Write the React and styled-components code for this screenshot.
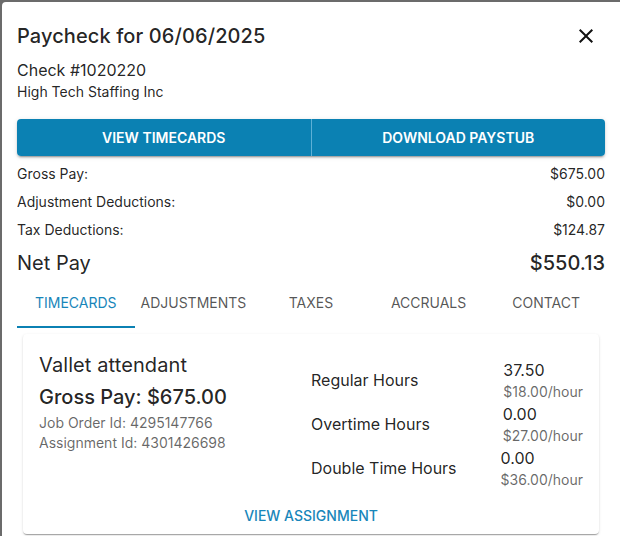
import { useState } from 'react';
import styled, { createGlobalStyle } from 'styled-components';

const GlobalStyle = createGlobalStyle`
  html, body {
    margin: 0;
    padding: 0;
    background: #6b6b6b;
    overflow: hidden;
  }
  body {
    font-family: Inter, Roboto, "Liberation Sans", Arial, sans-serif;
    color: rgba(0, 0, 0, 0.87);
  }
  * { box-sizing: border-box; }
`;

const PRIMARY = '#0b81b3';

const summary = [
  { label: 'Gross Pay:', value: '$675.00' },
  { label: 'Adjustment Deductions:', value: '$0.00' },
  { label: 'Tax Deductions:', value: '$124.87' },
];

const tabs = ['Timecards', 'Adjustments', 'Taxes', 'Accruals', 'Contact'];

const hours = [
  { label: 'Regular Hours', value: '37.50', rate: '$18.00/hour' },
  { label: 'Overtime Hours', value: '0.00', rate: '$27.00/hour' },
  { label: 'Double Time Hours', value: '0.00', rate: '$36.00/hour' },
];

const CloseIcon = () => (
  <svg width="24" height="24" viewBox="0 0 24 24" fill="currentColor">
    <path d="M19 6.41 17.59 5 12 10.59 6.41 5 5 6.41 10.59 12 5 17.59 6.41 19 12 13.41 17.59 19 19 17.59 13.41 12z" />
  </svg>
);

const App = () => {
  const [active, setActive] = useState(0);

  return (
    <>
      <GlobalStyle />
      <Dialog>
        <Header>
          <Title>Paycheck for 06/06/2025</Title>
          <CloseButton aria-label="close">
            <CloseIcon />
          </CloseButton>
        </Header>
        <Content>
          <CheckNo>Check #1020220</CheckNo>
          <Company>High Tech Staffing Inc</Company>
          <ButtonGroup>
            <GroupButton>View Timecards</GroupButton>
            <GroupButton>Download Paystub</GroupButton>
          </ButtonGroup>
          <Summary>
            {summary.map(row => (
              <SummaryRow key={row.label}>
                <span>{row.label}</span>
                <span>{row.value}</span>
              </SummaryRow>
            ))}
          </Summary>
          <NetRow>
            <NetLabel>Net Pay</NetLabel>
            <NetValue>$550.13</NetValue>
          </NetRow>
          <TabBar>
            {tabs.map((t, i) => (
              <Tab key={t} $active={i === active} onClick={() => setActive(i)}>
                {t}
              </Tab>
            ))}
          </TabBar>
          <TabPanel>
            <Card>
              <CardBody>
                <JobInfo>
                  <JobTitle>Vallet attendant</JobTitle>
                  <JobGross>Gross Pay: $675.00</JobGross>
                  <JobMeta>Job Order Id: 4295147766</JobMeta>
                  <JobMeta>Assignment Id: 4301426698</JobMeta>
                </JobInfo>
                <HoursList>
                  {hours.map(h => (
                    <HoursRow key={h.label}>
                      <HoursLabel>{h.label}</HoursLabel>
                      <HoursValue>
                        <Amount>{h.value}</Amount>
                        <Rate>{h.rate}</Rate>
                      </HoursValue>
                    </HoursRow>
                  ))}
                </HoursList>
              </CardBody>
              <CardActions>
                <TextButton>View Assignment</TextButton>
              </CardActions>
            </Card>
          </TabPanel>
        </Content>
      </Dialog>
    </>
  );
};

export default App;

const Dialog = styled.div`
  margin: 2px 0 0 2px;
  width: 618px;
  height: 600px;
  background: #ffffff;
  border-top-left-radius: 4px;
`;

const Header = styled.div`
  display: flex;
  align-items: center;
  justify-content: space-between;
  padding: 18px 22px 0 15px;
`;

const Title = styled.h2`
  margin: 0;
  font-size: 20px;
  font-weight: 500;
  line-height: 32px;
  letter-spacing: 0.1px;
`;

const CloseButton = styled.button`
  display: flex;
  align-items: center;
  justify-content: center;
  border: none;
  background: none;
  padding: 0;
  width: 24px;
  height: 24px;
  color: #111;
`;

const Content = styled.div`
  padding: 6px 15px 0 15px;
`;

const CheckNo = styled.div`
  font-size: 16px;
  line-height: 24px;
`;

const Company = styled.div`
  font-size: 14px;
  line-height: 20px;
`;

const ButtonGroup = styled.div`
  display: flex;
  margin-top: 17px;
  height: 37px;
  border-radius: 4px;
  overflow: hidden;
  box-shadow: 0px 3px 1px -2px rgba(0, 0, 0, 0.2), 0px 2px 2px 0px rgba(0, 0, 0, 0.14),
    0px 1px 5px 0px rgba(0, 0, 0, 0.12);
`;

const GroupButton = styled.button`
  flex: 1;
  border: none;
  background: ${PRIMARY};
  color: #ffffff;
  font-family: inherit;
  font-size: 14px;
  font-weight: 600;
  text-transform: uppercase;
  padding: 0 0 1px;
  &:first-child {
    border-right: 1px solid #5eb0d6;
  }
`;

const Summary = styled.div`
  margin-top: 4px;
`;

const SummaryRow = styled.div`
  display: flex;
  justify-content: space-between;
  font-size: 14px;
  line-height: 28px;
`;

const NetRow = styled.div`
  display: flex;
  justify-content: space-between;
  align-items: center;
  height: 32px;
  margin-top: 3px;
`;

const NetLabel = styled.div`
  font-size: 20px;
  font-weight: 400;
`;

const NetValue = styled.div`
  font-size: 20px;
  font-weight: 500;
`;

const TabBar = styled.div`
  display: grid;
  grid-template-columns: repeat(5, 1fr);
  height: 49px;
`;

const Tab = styled.button`
  border: none;
  background: none;
  padding: 0 2px;
  font-family: inherit;
  font-size: 14px;
  font-weight: 400;
  text-transform: uppercase;
  color: ${p => (p.$active ? '#1886ba' : 'rgba(0, 0, 0, 0.68)')};
  border-bottom: 2px solid ${p => (p.$active ? PRIMARY : 'transparent')};
`;

const TabPanel = styled.div`
  padding: 6px 6px;
`;

const Card = styled.div`
  background: #fff;
  border-radius: 4px;
  box-shadow: 0px 2px 1px -1px rgba(0, 0, 0, 0.2), 0px 1px 1px 0px rgba(0, 0, 0, 0.14),
    0px 1px 3px 0px rgba(0, 0, 0, 0.12);
`;

const CardBody = styled.div`
  display: grid;
  grid-template-columns: 1fr 1fr;
  padding: 15px 16px 7px;
`;

const JobInfo = styled.div`
  display: flex;
  flex-direction: column;
`;

const JobTitle = styled.div`
  font-size: 20px;
  line-height: 32px;
  letter-spacing: 0.1px;
`;

const JobGross = styled.div`
  font-size: 20px;
  font-weight: 500;
  line-height: 32px;
`;

const JobMeta = styled.div`
  font-size: 14px;
  line-height: 20px;
  color: rgba(0, 0, 0, 0.6);
`;

const HoursList = styled.div`
  display: flex;
  flex-direction: column;
  padding-top: 9px;
`;

const HoursRow = styled.div`
  display: flex;
  justify-content: space-between;
  align-items: center;
  height: 44px;
`;

const HoursLabel = styled.div`
  font-size: 16px;
  line-height: 24px;
`;

const HoursValue = styled.div`
  display: flex;
  flex-direction: column;
`;

const Amount = styled.div`
  font-size: 16px;
  line-height: 24px;
`;

const Rate = styled.div`
  font-size: 14px;
  line-height: 20px;
  color: rgba(0, 0, 0, 0.6);
`;

const CardActions = styled.div`
  display: flex;
  justify-content: center;
`;

const TextButton = styled.button`
  border: none;
  background: none;
  height: 37px;
  padding: 6px 8px 6px;
  font-family: inherit;
  font-size: 14px;
  font-weight: 500;
  text-transform: uppercase;
  color: #1886ba;
`;
